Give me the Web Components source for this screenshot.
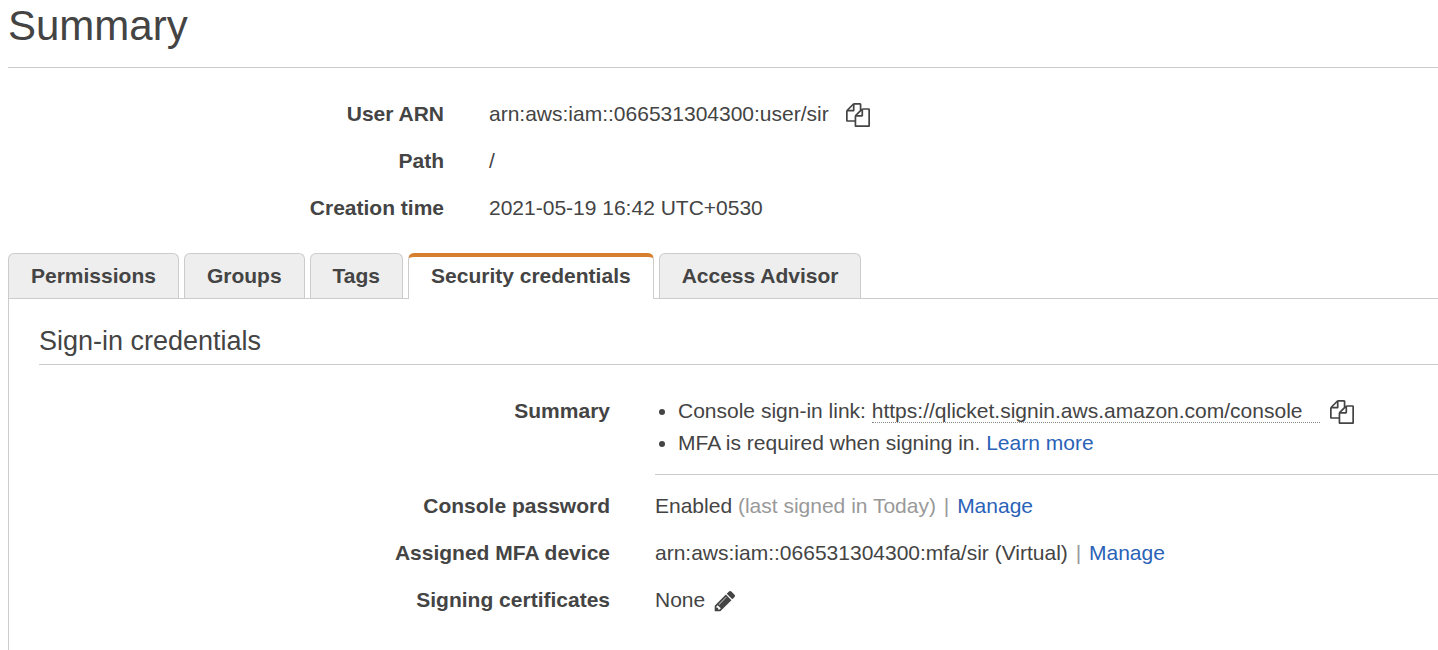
<!DOCTYPE html>
<html lang="en">
<head>
<meta charset="utf-8">
<meta name="viewport" content="width=device-width, initial-scale=1">
<title>Summary</title>
<style>
  body {
    --line: #ccc;
    --link: #2a62b8;
    --muted: #999;
    margin: 0;
    background: #fff;
    color: #444;
    font: 21px/32px "Liberation Sans", Arial, sans-serif;
  }
</style>
</head>
<body>
<user-page></user-page>

<template id="t-icon-button">
  <style>
    :host { display: inline-flex; vertical-align: middle; }
    button { display: flex; margin: 0; padding: 0; border: 0; background: none; color: inherit; cursor: pointer; }
    svg { width: 24px; height: 24px; fill: currentColor; }
  </style>
  <button type="button"><svg viewBox="0 0 1792 1792" aria-hidden="true"><path/></svg></button>
</template>

<template id="t-detail-row">
  <style>
    :host { display: grid; grid-template-columns: var(--label-width) minmax(0, 1fr); column-gap: 45px; }
    .label { text-align: right; font-weight: bold; }
  </style>
  <div class="label"><slot name="label"></slot></div>
  <div><slot></slot></div>
</template>

<template id="t-tab">
  <style>
    :host { display: block; }
    button {
      display: block; margin: 0; padding: 6px 22px; border: 1px solid var(--line); border-bottom: 0;
      border-radius: 6px 6px 0 0; background: #eee; color: inherit;
      font: inherit; font-weight: bold; white-space: nowrap; cursor: pointer;
    }
    :host([selected]) { margin-bottom: -1px; }
    :host([selected]) button { border-top: 4px solid #d67f2e; background: #fff; padding-top: 3px; padding-bottom: 7px; }
  </style>
  <button type="button" role="tab"><slot></slot></button>
</template>

<template id="t-tab-panel">
  <style>
    :host { display: block; }
    .tabs { display: flex; gap: 5px; }
    .panel { border: solid var(--line); border-width: 1px 0 0 1px; padding: 26px 0 35px 30px; }
  </style>
  <div class="tabs" role="tablist"><slot name="tab"></slot></div>
  <div class="panel" role="tabpanel"><slot></slot></div>
</template>

<template id="t-page">
  <style>
    :host { display: block; padding-left: 8px; overflow-x: clip; }
    h1, h2 { margin: 0; font-weight: normal; border-bottom: 1px solid var(--line); }
    h1 { font-size: 42px; line-height: 52px; padding-bottom: 15px; }
    h2 { font-size: 27px; line-height: 32px; padding-bottom: 7px; }
    .details { display: grid; gap: 15px; padding: 30px 0 29px; --label-width: 436px; }
    .credentials { display: grid; gap: 15px; padding-top: 30px; --label-width: 571px; }
    ul { margin: 0; padding: 0 0 15px 23px; border-bottom: 1px solid var(--line); }
    a { color: var(--link); text-decoration: none; }
    .url { color: inherit; border-bottom: 1px dotted #888; padding-right: 18px; }
    .muted { color: var(--muted); }
    .bar { color: var(--muted); margin: 0 2px; }
    icon-button { margin-left: 10px; height: 24px; }
    .copy { margin-left: 17px; }
    .edit { margin-left: 8px; }
    @media (max-width: 1000px) {
      .details, .credentials { --label-width: 30%; }
    }
  </style>
  <h1>Summary</h1>
  <div class="details">
    <detail-row><span slot="label">User ARN</span>arn:aws:iam::066531304300:user/sir<icon-button class="copy" icon="copy" label="Copy ARN"></icon-button></detail-row>
    <detail-row><span slot="label">Path</span>/</detail-row>
    <detail-row><span slot="label">Creation time</span>2021-05-19 16:42 UTC+0530</detail-row>
  </div>
  <tab-panel>
    <tab-item slot="tab">Permissions</tab-item>
    <tab-item slot="tab">Groups</tab-item>
    <tab-item slot="tab">Tags</tab-item>
    <tab-item slot="tab" selected>Security credentials</tab-item>
    <tab-item slot="tab">Access Advisor</tab-item>
    <h2>Sign-in credentials</h2>
    <div class="credentials">
      <detail-row><span slot="label">Summary</span>
        <ul>
          <li>Console sign-in link: <a class="url" href="#console">https://qlicket.signin.aws.amazon.com/console</a><icon-button icon="copy" label="Copy link"></icon-button></li>
          <li>MFA is required when signing in. <a href="#mfa">Learn more</a></li>
        </ul>
      </detail-row>
      <detail-row><span slot="label">Console password</span>Enabled <span class="muted">(last signed in Today)</span> <span class="bar">|</span> <a href="#password">Manage</a></detail-row>
      <detail-row><span slot="label">Assigned MFA device</span>arn:aws:iam::066531304300:mfa/sir (Virtual) <span class="bar">|</span> <a href="#device">Manage</a></detail-row>
      <detail-row><span slot="label">Signing certificates</span>None<icon-button class="edit" icon="edit" label="Edit signing certificates"></icon-button></detail-row>
    </div>
  </tab-panel>
</template>

<script>
  const ICONS = {
    copy: "M1696 384q40 0 68 28t28 68v1216q0 40-28 68t-68 28h-960q-40 0-68-28t-28-68v-288h-544q-40 0-68-28t-28-68v-672q0-40 20-88t48-76l408-408q28-28 76-48t88-20h416q40 0 68 28t28 68v328q68-40 128-40h416zm-544 213l-299 299h299v-299zm-640-384l-299 299h299v-299zm196 647l316-316v-416h-384v416q0 40-28 68t-68 28h-416v640h512v-256q0-40 20-88t48-76zm956 804v-1152h-384v416q0 40-28 68t-68 28h-416v640h896z",
    edit: "M491 1536l91-91-235-235-91 91v107h128v128h107zm523-928q0-22-22-22-10 0-17 7l-542 542q-7 7-7 17 0 22 22 22 10 0 17-7l542-542q7-7 7-17zm-54-192l416 416-832 832h-416v-416zm683 96q0 53-37 90l-166 166-416-416 166-165q36-38 90-38 53 0 91 38l235 234q37 39 37 91z"
  };

  class Base extends HTMLElement {
    connectedCallback() {
      if (this.shadowRoot) return;
      const root = this.attachShadow({ mode: "open" });
      root.append(document.getElementById(this.constructor.template).content.cloneNode(true));
      this.setup(root);
    }
    setup() {}
  }

  class IconButton extends Base {
    static template = "t-icon-button";
    setup(root) {
      root.querySelector("path").setAttribute("d", ICONS[this.getAttribute("icon")]);
      root.querySelector("button").setAttribute("aria-label", this.getAttribute("label"));
    }
  }
  class DetailRow extends Base { static template = "t-detail-row"; }
  class TabItem extends Base {
    static template = "t-tab";
    setup(root) {
      root.querySelector("button").setAttribute("aria-selected", this.hasAttribute("selected"));
    }
  }
  class TabPanel extends Base { static template = "t-tab-panel"; }
  class UserPage extends Base { static template = "t-page"; }

  customElements.define("icon-button", IconButton);
  customElements.define("detail-row", DetailRow);
  customElements.define("tab-item", TabItem);
  customElements.define("tab-panel", TabPanel);
  customElements.define("user-page", UserPage);
</script>
</body>
</html>
